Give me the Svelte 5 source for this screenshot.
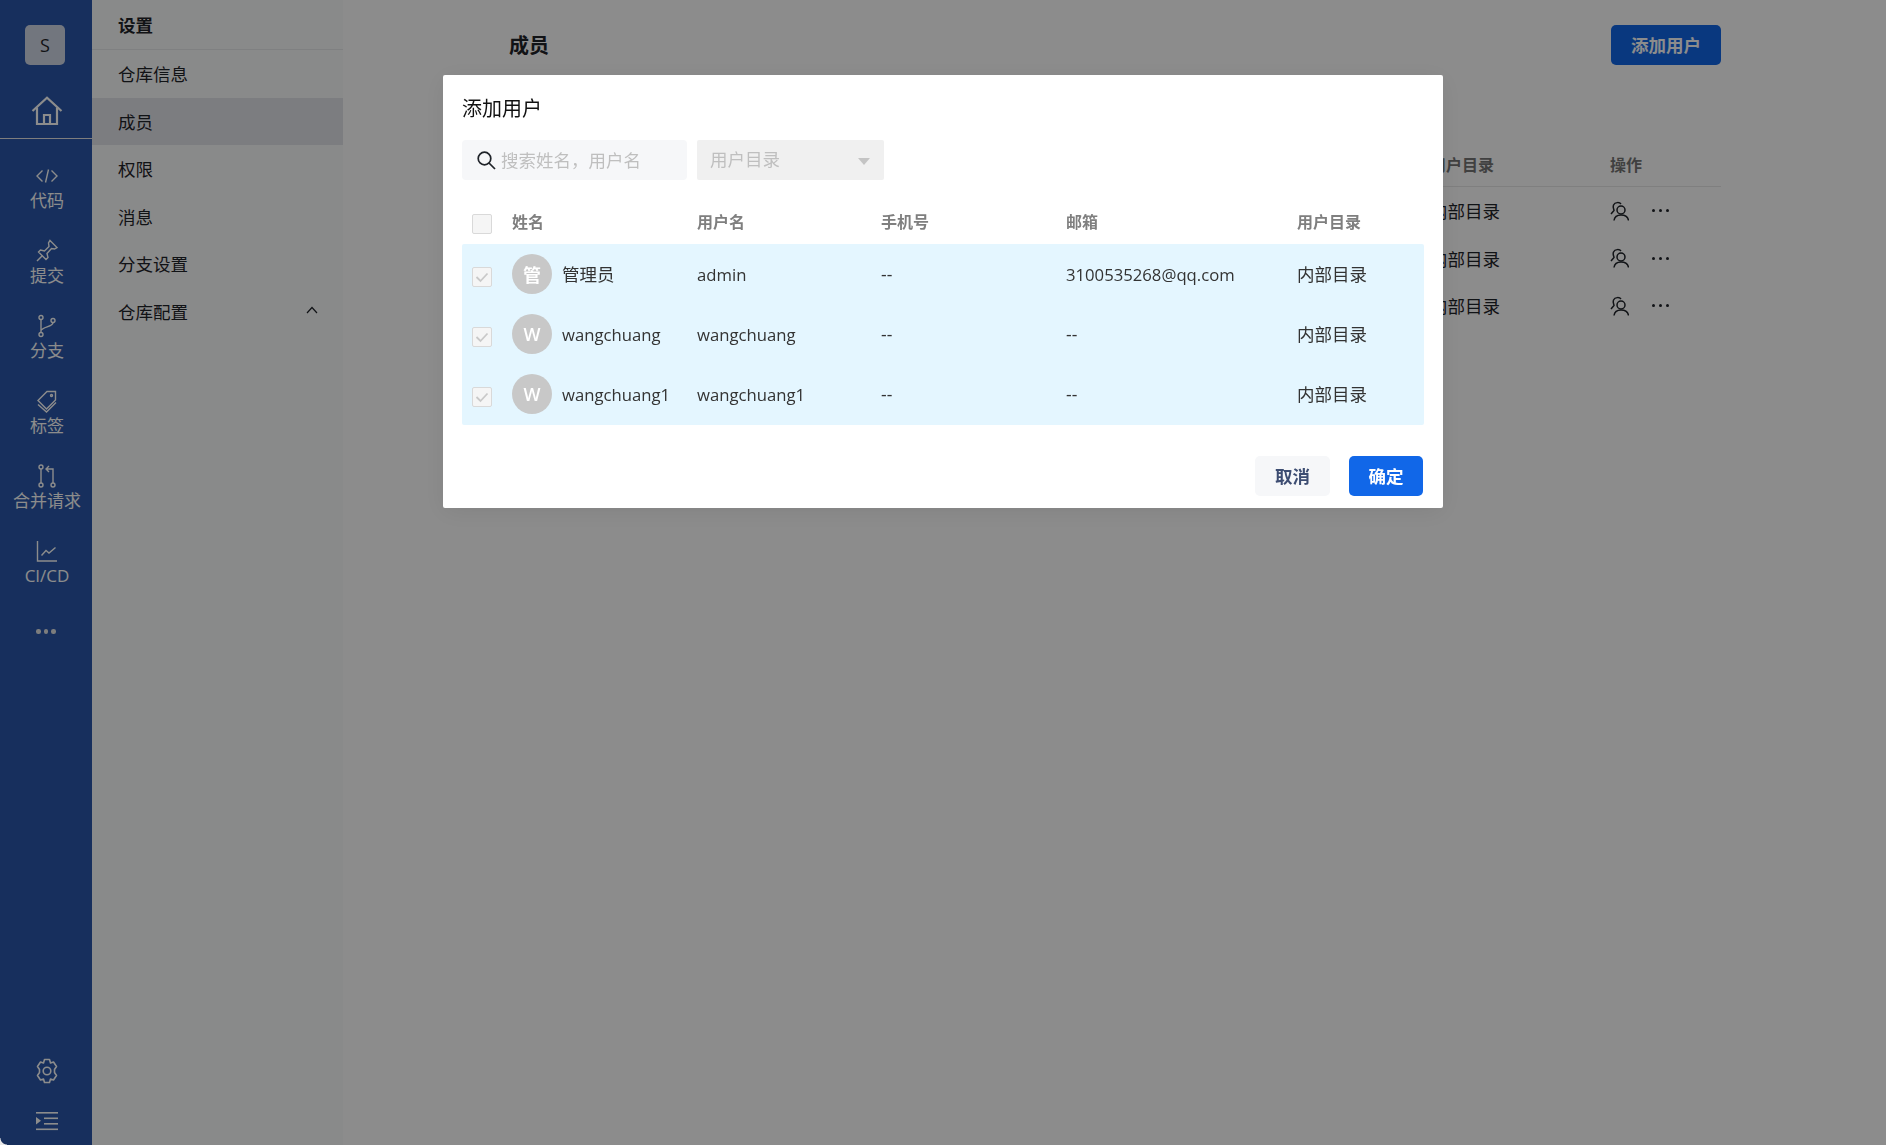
<script>
	const railItems = [
		{ label: '代码', icon: 'code' },
		{ label: '提交', icon: 'pin' },
		{ label: '分支', icon: 'branch' },
		{ label: '标签', icon: 'tag' },
		{ label: '合并请求', icon: 'merge' },
		{ label: 'CI/CD', icon: 'chart' }
	];
	const navItems = ['仓库信息', '成员', '权限', '消息', '分支设置', '仓库配置'];
	const users = [
		{ avatar: '管', name: '管理员', username: 'admin', phone: '--', email: '3100535268@qq.com', dir: '内部目录' },
		{ avatar: 'W', name: 'wangchuang', username: 'wangchuang', phone: '--', email: '--', dir: '内部目录' },
		{ avatar: 'W', name: 'wangchuang1', username: 'wangchuang1', phone: '--', email: '--', dir: '内部目录' }
	];
	const isLatin = (s) => /^[a-z]/i.test(s) || /^\d/.test(s);
</script>

<div class="page">
	<aside class="rail">
		<div class="logo">S</div>
		<div class="home">
			<svg width="32" height="30" viewBox="0 0 32 30" fill="none" stroke="currentColor" stroke-width="2.2">
				<path d="M1.5 15 16 1.8 30.5 15" />
				<path d="M6 11.5V28H26V11.5" />
				<path d="M13 28V19H19V28" />
			</svg>
		</div>
		{#each railItems as item}
			<div class="rail-item">
				<svg width="24" height="24" viewBox="0 0 24 24" fill="none" stroke="currentColor" stroke-width="1.4">
					{#if item.icon === 'code'}
						<path d="M7.5 6.5 2 12l5.500 5.500M16.500 6.500 22 12l-5.500 5.500M13.500 5.500l-3 13" />
					{:else if item.icon === 'pin'}
						<path d="M15 1.500 22 8.500 19.500 10 16.500 9.500 12 14.500 13 18.500 11 20.500 3.500 13 5.500 11 9.500 12 14 7.500 13.500 4Z" />
						<path d="M7.500 16.500 2 22" />
					{:else if item.icon === 'branch'}
						<circle cx="6" cy="3.500" r="2" />
						<circle cx="6" cy="20.500" r="2" />
						<circle cx="18" cy="6.500" r="2" />
						<path d="M6 5.500V18.500M18 8.500C18 13 8 12.500 6 16.500" />
					{:else if item.icon === 'tag'}
						<path d="M3 11.500 12 2.500H20.500V11L11.500 20Z" />
						<circle cx="16.500" cy="6.500" r="1" />
						<path d="M3 15.500 11.500 23 21 13.500" />
					{:else if item.icon === 'merge'}
						<circle cx="6" cy="3" r="2" />
						<circle cx="6" cy="21" r="2" />
						<circle cx="18" cy="21" r="2" />
						<path d="M6 5V19M18 19V5H11.500M14 2 11 5 14 8" />
					{:else}
						<path d="M2.500 2V22H22M6.500 16.500 11 11.500 14 14 20.500 8.500" />
					{/if}
				</svg>
				<span>{item.label}</span>
			</div>
		{/each}
		<div class="rail-more"><i></i><i></i><i></i></div>
		<div class="rail-bottom">
			<svg width="24" height="26" viewBox="0 0 24 26" fill="none" stroke="currentColor" stroke-width="1.600">
				<path d="M9.500 1.500H14.500L15.500 5 18.500 4 21.500 8.500 19.500 11.500V14.500L21.500 17.500 18.500 22 15.500 21 14.500 24.500H9.500L8.500 21 5.500 22 2.500 17.500 4.500 14.500V11.500L2.500 8.500 5.500 4 8.500 5Z" stroke-linejoin="round" />
				<circle cx="12" cy="13" r="3.800" />
			</svg>
			<svg width="24" height="20" viewBox="0 0 24 20" fill="currentColor">
				<rect x="1" y="1" width="22" height="1.600" />
				<rect x="9" y="6.500" width="14" height="1.600" />
				<rect x="9" y="12" width="14" height="1.600" />
				<rect x="1" y="17.500" width="22" height="1.600" />
				<path d="M1 6 6 9.800 1 13.500Z" />
			</svg>
		</div>
	</aside>

	<nav class="subnav">
		<div class="subnav-title">设置</div>
		{#each navItems as item}
			<div class="subnav-item" class:active={item === '成员'}>
				<span>{item}</span>
				{#if item === '仓库配置'}
					<svg width="12" height="8" viewBox="0 0 12 8" fill="none" stroke="currentColor" stroke-width="1.200"><path d="M1 7 6 1.500 11 7" /></svg>
				{/if}
			</div>
		{/each}
	</nav>

	<main class="content">
		<header class="content-head">
			<h2>成员</h2>
			<button class="btn btn-primary add">添加用户</button>
		</header>
		<div class="members">
			<div class="members-row members-head">
				<span>姓名</span>
				<span>用户目录</span>
				<span>操作</span>
			</div>
			{#each users as user}
				<div class="members-row">
					<span class:latin={isLatin(user.name)}>{user.name}</span>
					<span>{user.dir}</span>
					<span class="actions">
						<svg width="20" height="20" viewBox="0 0 20 20" fill="none" stroke="currentColor" stroke-width="1.500">
							<circle cx="12" cy="9" r="4" />
							<path d="M5 19.500C5.500 16 8 14 12 14S19 16 19.500 19.500" />
							<path d="M12 3C10.500 1 6 1 4.500 4 3.500 6.500 5 8.500 5 9.500L2 13" />
						</svg>
						<span class="dots"><i></i><i></i><i></i></span>
					</span>
				</div>
			{/each}
		</div>
	</main>
</div>

<div class="mask">
	<div class="modal">
		<div class="modal-title">添加用户</div>
		<div class="filters">
			<div class="search">
				<svg width="20" height="20" viewBox="0 0 20 20" fill="none" stroke="#1f2329" stroke-width="1.700">
					<circle cx="8.500" cy="8.500" r="6.300" />
					<path d="M13 13 19 19" />
				</svg>
				<span>搜索姓名，用户名</span>
			</div>
			<div class="select">
				<span>用户目录</span>
				<i class="caret"></i>
			</div>
		</div>
		<div class="table">
			<div class="tr th">
				<span class="check"></span>
				<span>姓名</span>
				<span>用户名</span>
				<span>手机号</span>
				<span>邮箱</span>
				<span>用户目录</span>
			</div>
			<div class="tbody">
				{#each users as user}
					<div class="tr">
						<span class="check checked">
							<svg width="14" height="14" viewBox="0 0 14 14" fill="none" stroke="#c9c9c9" stroke-width="1.800"><path d="M1.500 7 5.500 11 12.500 3.500" /></svg>
						</span>
						<span class="who">
							<span class="avatar">{user.avatar}</span>
							<span class:latin={isLatin(user.name)} class:cn={!isLatin(user.name)}>{user.name}</span>
						</span>
						<span class:latin={isLatin(user.username)}>{user.username}</span>
						<span>{user.phone}</span>
						<span class:latin={isLatin(user.email)}>{user.email}</span>
						<span class="cn">{user.dir}</span>
					</div>
				{/each}
			</div>
		</div>
		<div class="modal-foot">
			<button class="btn btn-ghost">取消</button>
			<button class="btn btn-blue">确定</button>
		</div>
	</div>
</div>
<div class="corner"></div>

<style>
	:global(body) {
		margin: 0;
		background: #fff;
		font-family: "Open Sans", "Noto Sans CJK SC", sans-serif;
		font-size: 17.5px;
		color: #1f2329;
	}

	.latin {
		font-size: 16.7px;
	}

	.cn {
		margin-bottom: 2px;
	}

	.page {
		display: flex;
		height: 1145px;
		overflow: hidden;
	}

	.rail {
		width: 92px;
		flex: none;
		display: flex;
		flex-direction: column;
		align-items: center;
		background: #2a57a9;
		color: #fff;
	}

	.logo {
		width: 40px;
		height: 40px;
		margin: 25px 2px 0 0;
		border-radius: 5px;
		background: #d0d8e6;
		color: #1f2329;
		font-size: 18px;
		display: flex;
		align-items: center;
		justify-content: center;
	}

	.home {
		width: 100%;
		height: 43px;
		margin-top: 31px;
		margin-bottom: 25px;
		padding-left: 2px;
		box-sizing: border-box;
		display: flex;
		justify-content: center;
		align-items: flex-start;
		border-bottom: 1px solid #e6e6e6;
	}

	.rail-item {
		height: 75px;
		padding-left: 2px;
		display: flex;
		flex-direction: column;
		align-items: center;
		line-height: 24px;
		font-size: 17px;
		white-space: nowrap;
		flex: none;
	}

	.rail-item span {
		margin-top: 1px;
	}

	.rail-more {
		display: flex;
		gap: 3px;
		margin-top: 15px;
	}

	.rail-more i {
		width: 4.500px;
		height: 4.500px;
		border-radius: 50%;
		background: #e4e4e4;
	}

	.rail-bottom {
		margin-top: auto;
		padding: 0 0 14px 2px;
		display: flex;
		flex-direction: column;
		align-items: center;
		gap: 27px;
	}

	.subnav {
		width: 251px;
		flex: none;
		background: #fafbfb;
	}

	.subnav-title {
		height: 49px;
		padding: 0 26px;
		line-height: 51px;
		font-weight: 700;
		border-bottom: 1px solid #e8eaec;
	}

	.subnav-item {
		height: 47.500px;
		padding: 0 26px;
		display: flex;
		align-items: center;
		justify-content: space-between;
	}

	.subnav-item.active {
		background: #e2e3ea;
	}

	.subnav-item svg {
		margin-right: -1px;
		margin-bottom: 3px;
	}

	.content {
		flex: 1;
		padding: 25px 165px 0 166px;
	}

	.content-head {
		display: flex;
		justify-content: space-between;
		align-items: center;
		height: 40px;
	}

	.content-head h2 {
		margin: 2px 0 0;
		font-size: 20px;
		line-height: 40px;
	}

	.members {
		margin-top: 76px;
	}

	.members-row {
		display: grid;
		grid-template-columns: 921px 180px 1fr;
		height: 47.500px;
		align-items: center;
	}

	.members-head {
		height: 45px;
		font-size: 16px;
		font-weight: 700;
		color: #757575;
		border-bottom: 1px solid #e8e8e8;
	}

	.actions {
		display: flex;
		align-items: center;
		gap: 23px;
	}

	.actions svg {
		margin-left: -1px;
	}

	.dots {
		display: flex;
		gap: 4px;
	}

	.dots i {
		width: 3px;
		height: 3px;
		border-radius: 50%;
		background: currentColor;
	}

	.btn {
		font: inherit;
		font-weight: 700;
		border: none;
		border-radius: 5px;
		height: 40px;
		padding: 0 0 2px;
	}

	.btn-primary,
	.btn-blue {
		background: #1167e8;
		color: #fff;
	}

	.add {
		width: 110px;
	}

	.btn-ghost {
		background: #f6f7f9;
		color: #3d4d72;
		width: 75px;
	}

	.btn-blue {
		width: 74px;
	}

	.mask {
		position: fixed;
		inset: 0;
		background: rgba(0, 0, 0, 0.45);
		display: flex;
		justify-content: center;
		align-items: flex-start;
	}

	.modal {
		width: 1000px;
		margin-top: 75px;
		padding: 21px 19px 12px;
		box-sizing: border-box;
		background: #fff;
		border-radius: 2px;
		box-shadow: 0 4px 24px rgba(0, 0, 0, 0.08);
	}

	.modal-title {
		font-size: 20px;
		line-height: 26px;
		color: #111;
	}

	.filters {
		display: flex;
		gap: 10px;
		margin-top: 18px;
	}

	.search {
		width: 225px;
		height: 40px;
		box-sizing: border-box;
		padding: 0 0 2px 14px;
		display: flex;
		align-items: center;
		gap: 5px;
		background: #f6f7f9;
		border-radius: 4px;
		color: #bfbfbf;
		white-space: nowrap;
	}

	.search svg {
		margin-top: 2px;
	}

	.select {
		width: 187px;
		height: 40px;
		box-sizing: border-box;
		padding: 0 14px 4px 13px;
		display: flex;
		align-items: center;
		justify-content: space-between;
		background: #f0f0f0;
		border-radius: 2px;
		color: #bfbfbf;
	}

	.caret {
		width: 0;
		height: 0;
		border-left: 6px solid transparent;
		border-right: 6px solid transparent;
		border-top: 7px solid #c4c4c4;
		margin-top: 6px;
	}

	.table {
		margin-top: 20px;
	}

	.tr {
		display: grid;
		grid-template-columns: 50px 185px 184px 185px 231px 1fr;
		align-items: center;
		height: 60px;
		color: #333;
	}

	.th {
		height: 44px;
		box-sizing: border-box;
		padding-bottom: 3px;
		font-weight: 700;
		font-size: 16px;
		color: #7f7f7f;
	}

	.th .check {
		margin-top: 7px;
	}

	.tbody {
		background: #e4f6ff;
		border-radius: 2px;
		padding-bottom: 1px;
	}

	.check {
		width: 18px;
		height: 18px;
		margin-left: 10px;
		margin-top: 6px;
		display: flex;
		align-items: center;
		justify-content: center;
		border: 1px solid #d9d9d9;
		border-radius: 2px;
		background: #f5f5f5;
	}

	.who {
		display: flex;
		align-items: center;
		gap: 10px;
		white-space: nowrap;
	}

	.avatar {
		width: 40px;
		height: 40px;
		border-radius: 50%;
		background: #c8c8c8;
		color: #fff;
		font-size: 18px;
		font-weight: 600;
		display: flex;
		align-items: center;
		justify-content: center;
	}

	.modal-foot {
		display: flex;
		justify-content: flex-end;
		gap: 19px;
		margin-top: 31px;
		padding-right: 1px;
	}

	.corner {
		position: fixed;
		left: 0;
		bottom: 0;
		width: 7px;
		height: 7px;
		background: radial-gradient(circle at 100% 0, transparent 6px, #e8e8e8 7px);
	}
</style>
